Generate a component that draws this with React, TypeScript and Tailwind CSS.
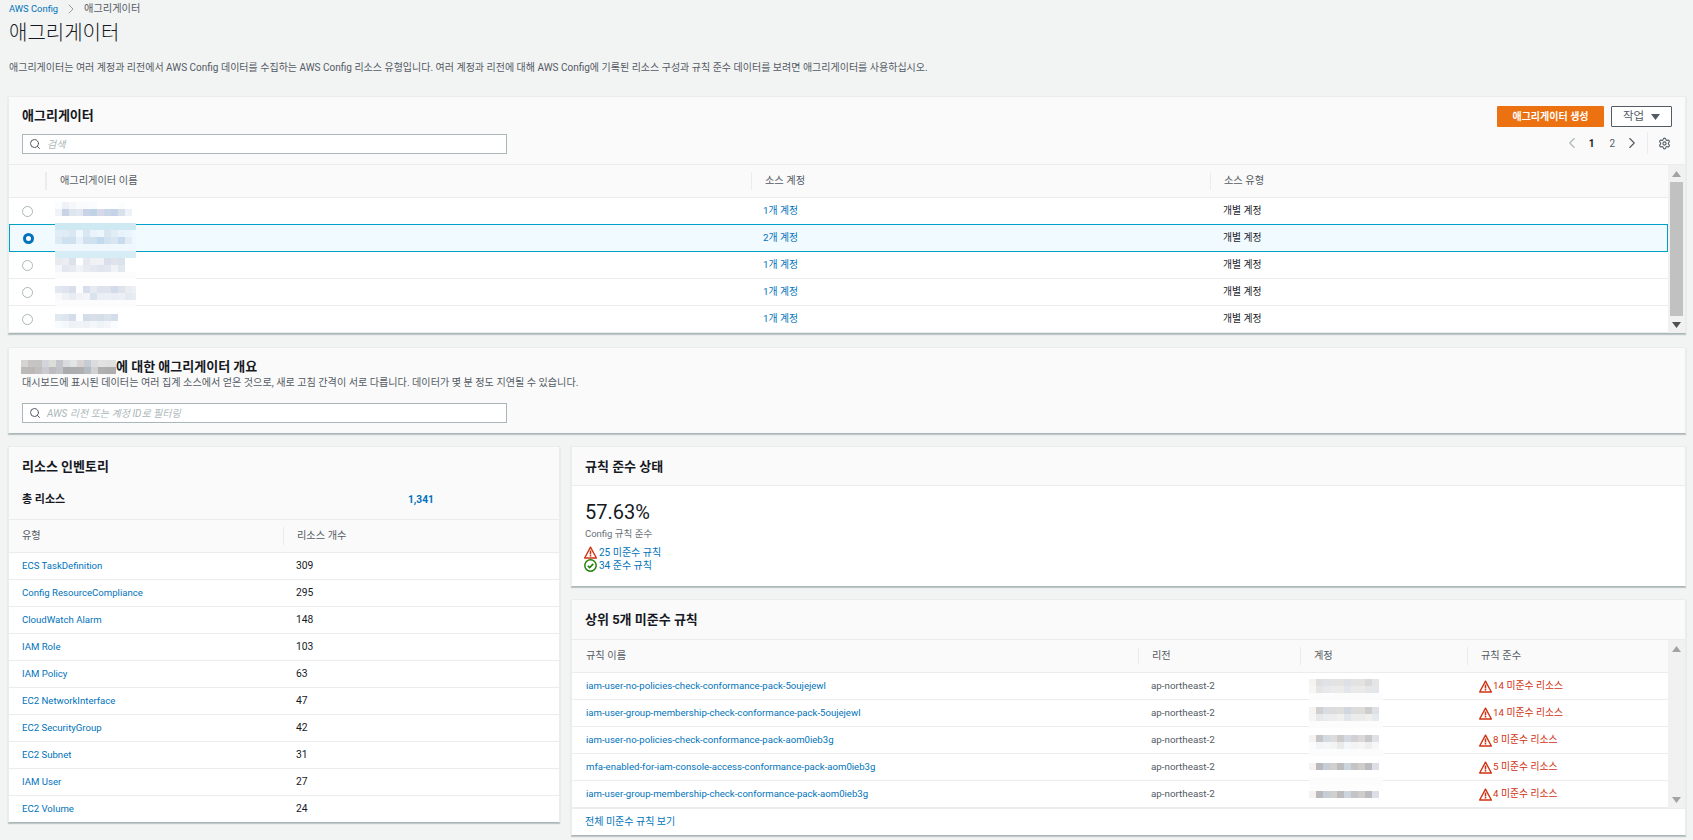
import React from "react";
import { ChevronLeft, ChevronRight, Search, Settings } from "lucide-react";

const F = "fcfcfc";
const solid = (c: string, n = 12) => Array(n).fill(c).join(",");

// redacted names, one array per mosaic, each line is a row of 7px cells
const nameMosaics = [
  ["fbfcfd,eef1f6,f5f7fa,fafbfc,fbfbfc,fbfcfd,ffffff,ffffff,ffffff,fbfcfd,ffffff,ffffff", "f0f2f6,c9d3e6,dfe5ef,e2e8f0,c9d3e5,bfd2e6,d5d9e9,c9d6e8,c6d2e8,d8e1ea,eef1f8,ffffff"],
  [solid("cfe9f3"), "e0ecf6,e0ebf5,d8e7f1,eef8fe,d9e7f2,eaf3fb,eef5fb,d7e6f1,e1edf6,e8f2fa,eaf4fb,f0f8fd", "dceaf4,cfe0ef,cfe1ef,e6f1f9,d0e0ee,cfe0ef,c3d9ee,d1e2f0,d9e6f2,c9dcee,e0edf7,f0f8fd", solid("f0f8fd"), solid("d6edf5")],
  ["e8eaf0,ecedf2,dde1ea,ffffff,e6e9f0,f0f1f5,f1f2f6,d9e0ea,dfe3ec,dbe2ec,ffffff,ffffff", "f5f6f9,e5e7f0,e6ebf1,f1f4f7,e8ebf2,e4e8f0,e0e5ee,e3e8f0,f0f2f6,e2e8ef,ffffff,ffffff", solid(F)],
  ["e2e8f0,dfe4ee,d8dfea,fdfdfe,d8deeb,e6eaf1,dde2ec,dfe3ec,d2dbea,dee3ec,e9ecf1,edf0f5", "f8f9fb,eff1f5,e8ecf3,f0f2f6,f2f4f7,d9e3ee,ebeef5,ecf0f6,eaedf4,ecf0f5,e5e9f1,e8ecf3", solid(F)],
  ["dfe9f1,dde6ef,d4dde9,fdfeff,d3dce9,d8dfe9,d5dde8,dbe2ea,d5dde9,ffffff,ffffff,ffffff", "f8fbfd,f5f8fa,eef2f6,f0f3f7,eef1f5,f4f6f9,eff2f6,f3f5f8,fafbfc,ffffff,ffffff,ffffff"],
];
const nameTops = ["top-[4px]", "top-[-2px]", "top-[6px]", "top-[7px]", "top-[8px]"];

const accountMosaics = [
  ["f5f2ef,dedede,dfe2e6,e2e3e5,e4e3e1,dde0e6,e3e3e3,e3e2e1,d9d9d9,e5e5e5,ffffff", "f7f6f5,e5e5e6,e6e8eb,ecebeb,ebebe9,e2e5ea,eaeaea,ebeaea,e6e6e6,e2e7ec,ffffff", solid(F, 11)],
  ["f5f2ef,d0d0d0,d7dde3,dcdcdc,dededc,d2d6e0,dcdcdc,dddcdb,cdcdcd,dde1e6,ffffff", "f5f5f4,e6e8ea,eaecee,ecedec,f0f0ef,e2e5ea,ebecec,ebebeb,efefee,e5eaee,ffffff", solid(F, 11)],
  ["f5f2ef,c6c6c8,d2dae2,dddbdb,cbcbcb,d3dae2,d2d0d2,dbd8d8,c8c8cb,dfe1e7,ffffff", "fbfbfb,f3f4f6,f4f6f8,f2f3f5,eaeaea,f4f7f9,f3f3f4,f6f5f5,eeeeef,f7f7f8,ffffff", solid(F, 11)],
  ["f5f2ef,b9b9bc,c5ced6,d2d0cf,bcbcbe,ccd4dc,c4c4c6,cfcdcc,bbbbbf,dce0e6,ffffff"],
  [solid(F, 11), solid("fdfdfd", 11), "f5f2ef,b9b9bc,c5ced6,d2d0cf,bcbcbe,ccd4dc,c4c4c6,cfcdcc,bbbbbf,dce0e6,ffffff"],
];
const accountTops = ["top-[6px]", "top-[7px]", "top-[8px]", "top-[9px]", "top-[-4px]"];

const titleMosaic = [
  "d6d3d3,c7c4c4,c6c3c3,d3d5dc,dcdcd9,c4c6cc,d8dcdf,e3e5e5,d9d4d2,c4cdd3,dbdcde,e2e2e2,e0e0e0,e0e0e0",
  "bcb9b9,bcb7b7,c2bebe,c9cbd0,bdbbbd,c1c3c7,a9abad,acadaf,b1aeae,b4bcc3,cfd1d3,b0b0b0,adadad,adadad",
];

const inventory = [
  ["ECS TaskDefinition", "309"],
  ["Config ResourceCompliance", "295"],
  ["CloudWatch Alarm", "148"],
  ["IAM Role", "103"],
  ["IAM Policy", "63"],
  ["EC2 NetworkInterface", "47"],
  ["EC2 SecurityGroup", "42"],
  ["EC2 Subnet", "31"],
  ["IAM User", "27"],
  ["EC2 Volume", "24"],
];

const rules = [
  ["iam-user-no-policies-check-conformance-pack-5oujejewl", "14"],
  ["iam-user-group-membership-check-conformance-pack-5oujejewl", "14"],
  ["iam-user-no-policies-check-conformance-pack-aom0ieb3g", "8"],
  ["mfa-enabled-for-iam-console-access-conformance-pack-aom0ieb3g", "5"],
  ["iam-user-group-membership-check-conformance-pack-aom0ieb3g", "4"],
];

const Mosaic = ({ rows, width, className }: { rows: string[]; width: number; className?: string }) => (
  <svg width={width} height={rows.length * 7} className={className} shapeRendering="crispEdges">
    {rows.map((row, y) =>
      row.split(",").map((c, x) => <rect key={x + "-" + y} x={x * 7} y={y * 7} width={7} height={7} fill={"#" + c} />)
    )}
  </svg>
);

const WarnIcon = () => (
  <svg width="13" height="13" viewBox="0 0 16 16" className="shrink-0">
    <path d="M8 1.4 15.2 14.8H.8Z" fill="#fff" stroke="#d13212" strokeWidth="1.7" strokeLinejoin="round" />
    <path d="M8 5.6v4.8M8 11.2v1.8" stroke="#d13212" strokeWidth="1.9" />
  </svg>
);

const OkIcon = () => (
  <svg width="13" height="13" viewBox="0 0 16 16" className="shrink-0">
    <circle cx="8" cy="8" r="7" fill="#fff" stroke="#1d8102" strokeWidth="1.8" />
    <path d="M4.6 8.2 7 10.6l4.4-4.6" fill="none" stroke="#1d8102" strokeWidth="1.8" />
  </svg>
);

const Caret = ({ down, className }: { down?: boolean; className?: string }) => (
  <svg width="9" height="6" viewBox="0 0 9 6" className={className}>
    <path d={down ? "M0 0h9L4.5 6Z" : "M0 6h9L4.5 0Z"} fill="currentColor" />
  </svg>
);

const Scrollbar = ({ thumb }: { thumb?: boolean }) => (
  <div className="w-[17px] shrink-0 bg-[#f1f1f1] flex flex-col items-center">
    <div className="h-[17px] flex items-center">
      <Caret className="text-[#a3a3a3]" />
    </div>
    <div className={thumb ? "w-[13px] flex-1 bg-[#c1c1c1]" : "flex-1"} />
    <div className="h-[17px] flex items-center">
      <Caret down className={thumb ? "text-[#505050]" : "text-[#a3a3a3]"} />
    </div>
  </div>
);

const HeadCell = ({ className, children }: { className?: string; children?: React.ReactNode }) => (
  <div className={"h-[32px] flex items-center " + className}>
    <div className="h-[18px] border-l border-[#eaeded] pl-[13px] flex items-center text-[10.2px] text-[#545b64]">{children}</div>
  </div>
);

const SearchBox = ({ placeholder }: { placeholder: string }) => (
  <div className="w-[485px] h-[20px] border border-[#aab7b8] bg-white flex items-center pl-[6px] gap-[6px]">
    <Search size={12} strokeWidth={2} className="text-[#545b64] shrink-0" />
    <span className="italic text-[10px] text-[#aab7b8]">{placeholder}</span>
  </div>
);

const Panel = ({ className, children }: { className?: string; children: React.ReactNode }) => (
  <section className={"border border-[#eaeded] border-b-[#aab7b8] shadow-[0_1px_1px_0_rgba(0,28,36,0.2)] " + className}>{children}</section>
);

const AggregatorPanel = () => (
  <Panel className="h-[238px] mt-[20px] bg-white">
    <div className="h-[67px] bg-[#fafafa] flex justify-between pl-[13px] pr-[13px] pt-[9px]">
      <div>
        <h2 className="text-[13px] font-bold leading-[20px] text-[#16191f]">애그리게이터</h2>
        <div className="mt-[8px]">
          <SearchBox placeholder="검색" />
        </div>
      </div>
      <div className="flex flex-col items-end">
        <div className="flex gap-[7px]">
          <button className="w-[107px] h-[21px] bg-[#ec7211] text-white text-[10px] font-bold rounded-[1px]">애그리게이터 생성</button>
          <button className="w-[61px] h-[21px] bg-white border border-[#545b64] rounded-[1px] text-[11.5px] text-[#545b64] flex items-center justify-center gap-[7px]">
            작업
            <Caret down className="text-[#545b64]" />
          </button>
        </div>
        <div className="flex items-center h-[24px] mt-[4px]">
          <ChevronLeft size={18} strokeWidth={1.5} className="text-[#aab7b8]" />
          <span className="ml-[8px] font-bold text-[#16191f] text-[10px]">1</span>
          <span className="ml-[15px] text-[#545b64] text-[10px]">2</span>
          <ChevronRight size={18} strokeWidth={1.5} className="ml-[8px] text-[#545b64]" />
          <div className="h-[22px] border-l border-[#eaeded] ml-[6px]" />
          <Settings size={13} strokeWidth={2} className="ml-[10px] mr-[1px] text-[#545b64]" />
        </div>
      </div>
    </div>
    <div className="flex border-t border-[#eaeded]">
      <div className="flex-1 min-w-0">
        <div className="flex bg-[#fafafa] border-b border-[#eaeded]">
          <HeadCell className="w-[37px] pl-[36px] shrink-0" />
          <HeadCell className="w-[705px] shrink-0">애그리게이터 이름</HeadCell>
          <HeadCell className="w-[459px] shrink-0">소스 계정</HeadCell>
          <HeadCell className="flex-1">소스 유형</HeadCell>
        </div>
        {nameMosaics.map((m, i) => {
          const selected = i === 1;
          return (
            <div
              key={i}
              className={
                "flex items-center text-[9.8px] " +
                (selected ? "h-[28px] -mt-[1px] relative bg-[#f1faff] border border-[#00a1c9]" : "h-[27px] bg-white border-b border-[#eaeded]")
              }
            >
              <div className={"flex justify-center shrink-0 " + (selected ? "w-[36px]" : "w-[37px]")}>
                <div className={selected ? "size-[11px] rounded-full border-[3px] border-[#0073bb] bg-white" : "size-[11px] rounded-full border border-[#aab7b8] bg-white"} />
              </div>
              <div className="w-[705px] shrink-0 relative h-full">
                <Mosaic rows={m} width={81} className={"absolute left-[9px] " + nameTops[i]} />
              </div>
              <div className="w-[459px] shrink-0 pl-[12px] text-[#0073bb]">{selected ? "2개 계정" : "1개 계정"}</div>
              <div className="pl-[13px] text-[#16191f]">개별 계정</div>
            </div>
          );
        })}
      </div>
      <Scrollbar thumb />
    </div>
  </Panel>
);

const SummaryPanel = () => (
  <Panel className="h-[87px] mt-[13px] bg-[#fafafa] pl-[13px] pt-[11px]">
    <div className="flex items-center h-[16px]">
      <Mosaic rows={titleMosaic} width={95} className="shrink-0 -ml-[1px]" />
      <h2 className="text-[13px] font-bold text-[#16191f]">에 대한 애그리게이터 개요</h2>
    </div>
    <p className="text-[10.1px] leading-[16px] text-[#545b64]">
      대시보드에 표시된 데이터는 여러 집계 소스에서 얻은 것으로, 새로 고침 간격이 서로 다릅니다. 데이터가 몇 분 정도 지연될 수 있습니다.
    </p>
    <div className="mt-[12px]">
      <SearchBox placeholder="AWS 리전 또는 계정 ID로 필터링" />
    </div>
  </Panel>
);

const InventoryPanel = () => (
  <Panel className="h-[377px] bg-white">
    <div className="h-[72px] bg-[#fafafa] pl-[13px] pt-[10px]">
      <h2 className="text-[13px] font-bold leading-[20px] text-[#16191f]">리소스 인벤토리</h2>
      <div className="flex mt-[15px] text-[11px] leading-[16px]">
        <span className="w-[386px] font-bold text-[#16191f]">총 리소스</span>
        <span className="font-bold text-[10.2px] text-[#0073bb]">1,341</span>
      </div>
    </div>
    <div className="flex bg-[#fafafa] border-y border-[#eaeded] pl-[13px]">
      <div className="w-[261px] h-[32px] flex items-center text-[10.2px] text-[#545b64]">유형</div>
      <HeadCell>리소스 개수</HeadCell>
    </div>
    {inventory.map(([name, count]) => (
      <div key={name} className="flex items-center h-[27px] border-b border-[#eaeded] pl-[13px] last:border-b-0 last:h-[26px]">
        <span className="w-[274px] text-[9.6px] text-[#0073bb]">{name}</span>
        <span className="text-[10.3px] text-[#16191f]">{count}</span>
      </div>
    ))}
  </Panel>
);

const CompliancePanel = () => (
  <Panel className="h-[141px] bg-white">
    <h2 className="h-[39px] bg-[#fafafa] border-b border-[#eaeded] pl-[13px] pt-[1px] flex items-center text-[13px] font-bold text-[#16191f]">규칙 준수 상태</h2>
    <div className="pl-[13px] pt-[13px]">
      <div className="text-[20px] leading-[26px] text-[#16191f]">57.63%</div>
      <div className="text-[9.5px] leading-[14px] mt-[2px] text-[#687078]">Config 규칙 준수</div>
      <div className="flex items-center gap-[2px] -ml-[1px] mt-[4px] h-[14px] text-[10px] text-[#0073bb]">
        <WarnIcon />
        25 미준수 규칙
      </div>
      <div className="flex items-center gap-[2px] -ml-[1px] h-[13px] text-[10px] text-[#0073bb]">
        <OkIcon />
        34 준수 규칙
      </div>
    </div>
  </Panel>
);

const RulesPanel = () => (
  <Panel className="h-[237px] bg-white">
    <h2 className="h-[40px] bg-[#fafafa] border-b border-[#eaeded] pl-[13px] flex items-center text-[13px] font-bold text-[#16191f]">상위 5개 미준수 규칙</h2>
    <div className="flex border-b border-[#eaeded]">
      <div className="flex-1 min-w-0">
        <div className="flex bg-[#fafafa] border-b border-[#eaeded]">
          <div className="w-[566px] h-[32px] shrink-0 pl-[14px] flex items-center text-[10.2px] text-[#545b64]">규칙 이름</div>
          <HeadCell className="w-[162px] shrink-0">리전</HeadCell>
          <HeadCell className="w-[167px] shrink-0">계정</HeadCell>
          <HeadCell className="flex-1">규칙 준수</HeadCell>
        </div>
        {rules.map(([name, count], i) => (
          <div key={name} className="flex items-center h-[27px] border-b border-[#eaeded]">
            <div className="w-[566px] shrink-0 pl-[14px] text-[9.6px] text-[#0073bb]">{name}</div>
            <div className="w-[162px] shrink-0 pl-[13px] text-[9.8px] text-[#545b64]">ap-northeast-2</div>
            <div className="w-[167px] shrink-0 relative h-full">
              <Mosaic rows={accountMosaics[i]} width={74} className={"absolute left-[9px] " + accountTops[i]} />
            </div>
            <div className="flex items-center gap-[1px] pl-[12px] text-[9.8px] text-[#d13212]">
              <WarnIcon />
              {count} 미준수 리소스
            </div>
          </div>
        ))}
      </div>
      <Scrollbar />
    </div>
    <div className="h-[26px] pl-[13px] pb-[2px] flex items-center text-[10px] text-[#0073bb]">전체 미준수 규칙 보기</div>
  </Panel>
);

const App = () => {
  return (
    <div className="h-[840px] overflow-hidden bg-[#f2f3f3] pl-[8px] pr-[7px] font-['Roboto','Noto_Sans_CJK_KR',sans-serif]">
      <nav className="flex items-center h-[18px] pl-[1px]">
        <span className="text-[9.4px] text-[#0073bb]">AWS Config</span>
        <ChevronRight size={16} strokeWidth={1} className="mx-[5px] text-[#687078]" />
        <span className="text-[10.2px] text-[#545b64]">애그리게이터</span>
      </nav>
      <h1 className="text-[20px] leading-[30px] pl-[1px] font-light text-[#16191f]">애그리게이터</h1>
      <p className="text-[10px] leading-[16px] pl-[1px] text-[#545b64] mt-[12px]">
        애그리게이터는 여러 계정과 리전에서 AWS Config 데이터를 수집하는 AWS Config 리소스 유형입니다. 여러 계정과 리전에 대해 AWS Config에 기록된 리소스 구성과 규칙 준수 데이터를 보려면 애그리게이터를 사용하십시오.
      </p>
      <AggregatorPanel />
      <SummaryPanel />
      <div className="grid grid-cols-[552px_1fr] gap-x-[11px] mt-[12px] items-start">
        <InventoryPanel />
        <div className="flex flex-col gap-[12px]">
          <CompliancePanel />
          <RulesPanel />
        </div>
        <Panel className="h-[20px] mt-[13px] col-start-1 bg-[#fafafa]">
          <div />
        </Panel>
      </div>
    </div>
  );
};

export default App;
